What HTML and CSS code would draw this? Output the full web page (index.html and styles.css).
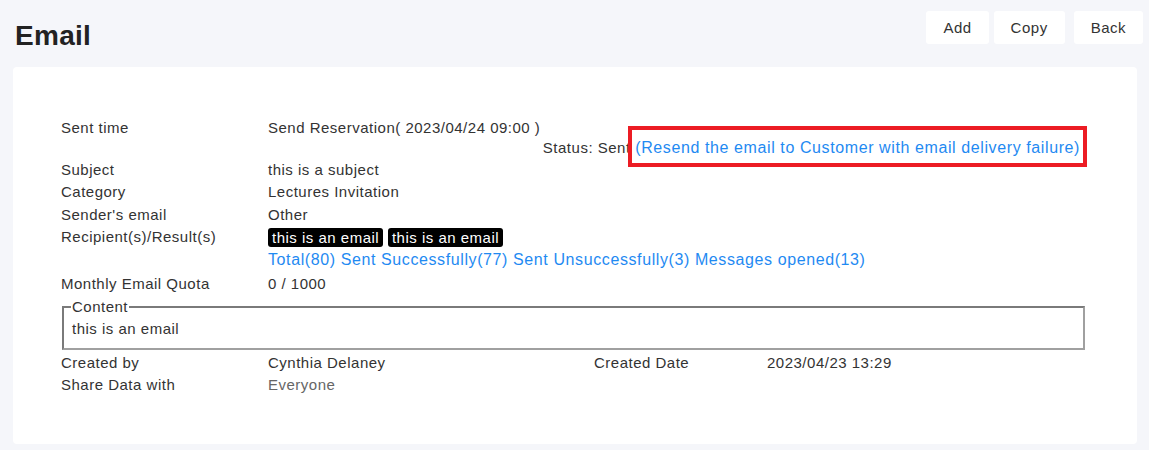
FILE: index.html
```html
<!DOCTYPE html>
<html lang="en">
<head>
  <meta charset="UTF-8">
  <meta name="viewport" content="width=device-width, initial-scale=1.0">
  <title>Email</title>
  <link rel="stylesheet" href="styles.css">
</head>
<body>
  <div class="header">
    <h1>Email</h1>
    <div class="actions">
      <button class="btn">Add</button>
      <button class="btn">Copy</button>
      <button class="btn btn-back">Back</button>
    </div>
  </div>

  <div class="card">
    <div class="row">
      <div class="label">Sent time</div>
      <div class="value">
        <div>Send Reservation( 2023/04/24 09:00 )</div>
        <div class="status">Status: Sent <a class="link highlight" href="#">(Resend the email to Customer with email delivery failure)</a></div>
      </div>
    </div>
    <div class="row">
      <div class="label">Subject</div>
      <div class="value">this is a subject</div>
    </div>
    <div class="row">
      <div class="label">Category</div>
      <div class="value">Lectures Invitation</div>
    </div>
    <div class="row">
      <div class="label">Sender's email</div>
      <div class="value">Other</div>
    </div>
    <div class="row">
      <div class="label">Recipient(s)/Result(s)</div>
      <div class="value">
        <div><span class="tag">this is an email</span> <span class="tag">this is an email</span></div>
        <div><a class="link" href="#">Total(80) Sent Successfully(77) Sent Unsuccessfully(3) Messages opened(13)</a></div>
      </div>
    </div>
    <div class="row row-quota">
      <div class="label">Monthly Email Quota</div>
      <div class="value">0 / 1000</div>
    </div>

    <fieldset class="content">
      <legend>Content</legend>
      <div>this is an email</div>
    </fieldset>

    <div class="row row-four">
      <div class="label">Created by</div>
      <div class="value">Cynthia Delaney</div>
      <div class="label">Created Date</div>
      <div class="value">2023/04/23 13:29</div>
    </div>
    <div class="row">
      <div class="label">Share Data with</div>
      <div class="value muted">Everyone</div>
    </div>
  </div>
</body>
</html>
```

FILE: styles.css
```css
body {
  margin: 0;
  background-color: #f5f6fa;
  font-family: "Liberation Sans", Arial, sans-serif;
  font-size: 15px;
  letter-spacing: 0.5px;
  color: #333;
}

.header {
  display: flex;
  justify-content: space-between;
  align-items: flex-start;
  height: 67px;
  padding: 11px 6px 0 15px;
  box-sizing: border-box;
}

h1 {
  margin: 9px 0 0;
  font-size: 28px;
  line-height: 32px;
  font-weight: bold;
  letter-spacing: 0.3px;
  color: #222;
}

.actions {
  display: flex;
  gap: 5px;
}

.btn {
  height: 33px;
  padding: 0 17px;
  border: none;
  border-radius: 3px;
  background-color: #fff;
  font-family: inherit;
  font-size: 15px;
  letter-spacing: 0.5px;
  color: #333;
  cursor: pointer;
}

.btn-back {
  margin-left: 4px;
}

.card {
  margin: 0 12px 0 13px;
  padding: 50px 52px 47px 48px;
  background-color: #fff;
  border-radius: 4px;
  line-height: 22.5px;
}

.row {
  display: grid;
  grid-template-columns: 207px 1fr;
}

.row-four {
  grid-template-columns: 207px 326px 173px 1fr;
  margin-top: 2px;
}

.row-quota {
  margin-top: 2px;
}

.status {
  text-align: right;
  line-height: 16px;
  margin-bottom: 3px;
  padding-right: 5px;
}

.link {
  color: #1f8af2;
  font-size: 16px;
  letter-spacing: 0.6px;
  text-decoration: none;
}

.highlight {
  position: relative;
}

.highlight::after {
  content: "";
  position: absolute;
  top: -13px;
  bottom: -11px;
  left: -7px;
  right: -7px;
  border: 4px solid #ec1c24;
}

.tag {
  display: inline-block;
  padding: 0 4px;
  line-height: 19px;
  border-radius: 3px;
  background-color: #000;
  color: #fff;
  vertical-align: -1px;
}

.muted {
  color: #666;
}

.content {
  margin: 0 0 0 1px;
  padding: 0 8px 7px;
  border: 2px solid #808080;
  border-color: #7a7a7a #a0a0a0 #a0a0a0 #7a7a7a;
}

.content legend {
  padding: 0 1px;
  margin-left: -1px;
}
```
